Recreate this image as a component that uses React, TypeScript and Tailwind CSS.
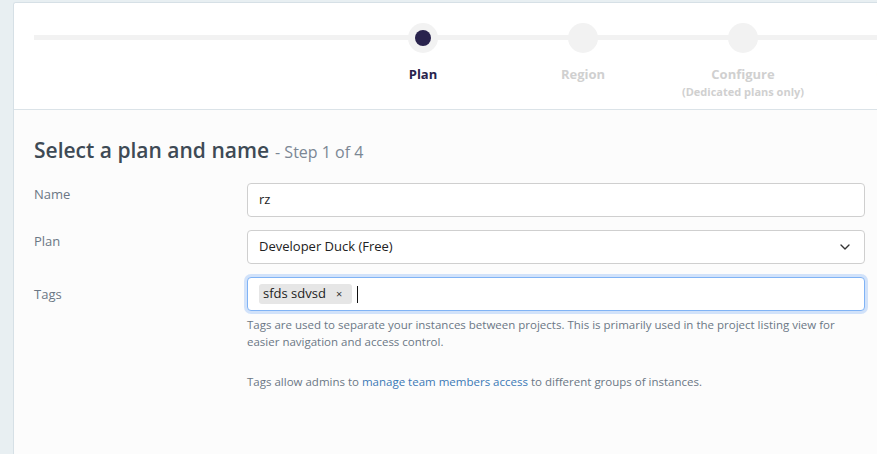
import { ChevronDown } from "lucide-react";

const steps = [
  { label: "Plan", active: true },
  { label: "Region" },
  { label: "Configure", sub: "(Dedicated plans only)" },
  { label: "Confirm" },
];

function Stepper() {
  return (
    <div className="relative h-[107px] border-b border-[#dbe3e8] bg-white">
      <div className="absolute left-[20px] right-0 top-[32px] h-[5px] bg-[#f2f2f2]" />
      <div className="relative flex pl-[329px] pt-[20px]">
        {steps.map((s) => (
          <div key={s.label} className="flex w-[160px] shrink-0 flex-col items-center">
            <div className="flex h-[30px] w-[30px] items-center justify-center rounded-full bg-[#f2f2f2]">
              {s.active && <div className="h-[16px] w-[16px] rounded-full bg-[#29234d]" />}
            </div>
            <div
              className={
                s.active
                  ? "mt-[12px] text-[13px] font-bold leading-[18px] text-[#29234d]"
                  : "mt-[12px] text-[13px] font-bold leading-[18px] text-[#d0d0d0]"
              }
            >
              {s.label}
            </div>
            {s.sub && (
              <div className="mt-[1px] text-[11px] font-bold leading-[16px] text-[#d0d0d0]">{s.sub}</div>
            )}
          </div>
        ))}
      </div>
    </div>
  );
}

function Row({ label, top, children }: { label: string; top: string; children: React.ReactNode }) {
  return (
    <div className="flex">
      <div className={`w-[213px] shrink-0 text-[13px] text-[#6b7785] ${top}`}>{label}</div>
      <div className="flex-1">{children}</div>
    </div>
  );
}

export default function App() {
  return (
    <div
      className="flex min-h-[454px] bg-[#e8eff2] pt-[2px] pl-[13px]"
      style={{ fontFamily: '"Open Sans", "Noto Sans", sans-serif' }}
    >
      <div className="flex-1 overflow-hidden rounded-tl-[3px] border-l border-t border-[#d6e0e6] bg-[#fcfcfc]">
        <Stepper />
        <div className="pl-[20px] pr-[12px] pt-[25px]">
          <h1 className="text-[21px] font-semibold leading-[30px] text-[#3e4a55]">
            Select a plan and name
            <span className="ml-[6px] text-[16px] font-normal text-[#7b8794]">- Step 1 of 4</span>
          </h1>
          <div className="mt-[16px] flex flex-col gap-[13px]">
            <Row label="Name" top="pt-[2px]">
              <div className="flex h-[34px] items-center rounded-[4px] border border-[#cfcfcf] bg-white px-[11px] text-[13px] text-[#222]">
                rz
              </div>
            </Row>
            <Row label="Plan" top="pt-[2px]">
              <div className="flex h-[34px] items-center justify-between rounded-[4px] border border-[#cfcfcf] bg-white px-[11px] text-[13px] text-[#222]">
                <span>Developer Duck (Free)</span>
                <ChevronDown className="h-[16px] w-[16px] text-[#333]" strokeWidth={2} />
              </div>
            </Row>
            <Row label="Tags" top="pt-[8px]">
              <div className="flex h-[34px] items-center rounded-[4px] border border-[#80b3f5] bg-white px-[11px] text-[13px] text-[#222] shadow-[0_0_0_3px_rgba(128,179,245,0.35)]">
                <span className="flex h-[20px] items-center rounded-[3px] bg-[#e6e6e6] pl-[4px] pr-[10px]">
                  sfds sdvsd
                  <span className="ml-[10px] text-[11px] text-[#333]">×</span>
                </span>
                <span className="ml-[5px] h-[17px] w-[1px] bg-[#111]" />
              </div>
              <p className="mt-[5px] text-[11.5px] leading-[17px] text-[#6b7785]">
                Tags are used to separate your instances between projects. This is primarily used in the project listing view for easier navigation and access control.
              </p>
              <p className="mt-[23px] text-[11.5px] leading-[17px] text-[#6b7785]">
                Tags allow admins to <span className="text-[#3b79b6]">manage team members access</span> to different groups of instances.
              </p>
            </Row>
          </div>
        </div>
      </div>
    </div>
  );
}
